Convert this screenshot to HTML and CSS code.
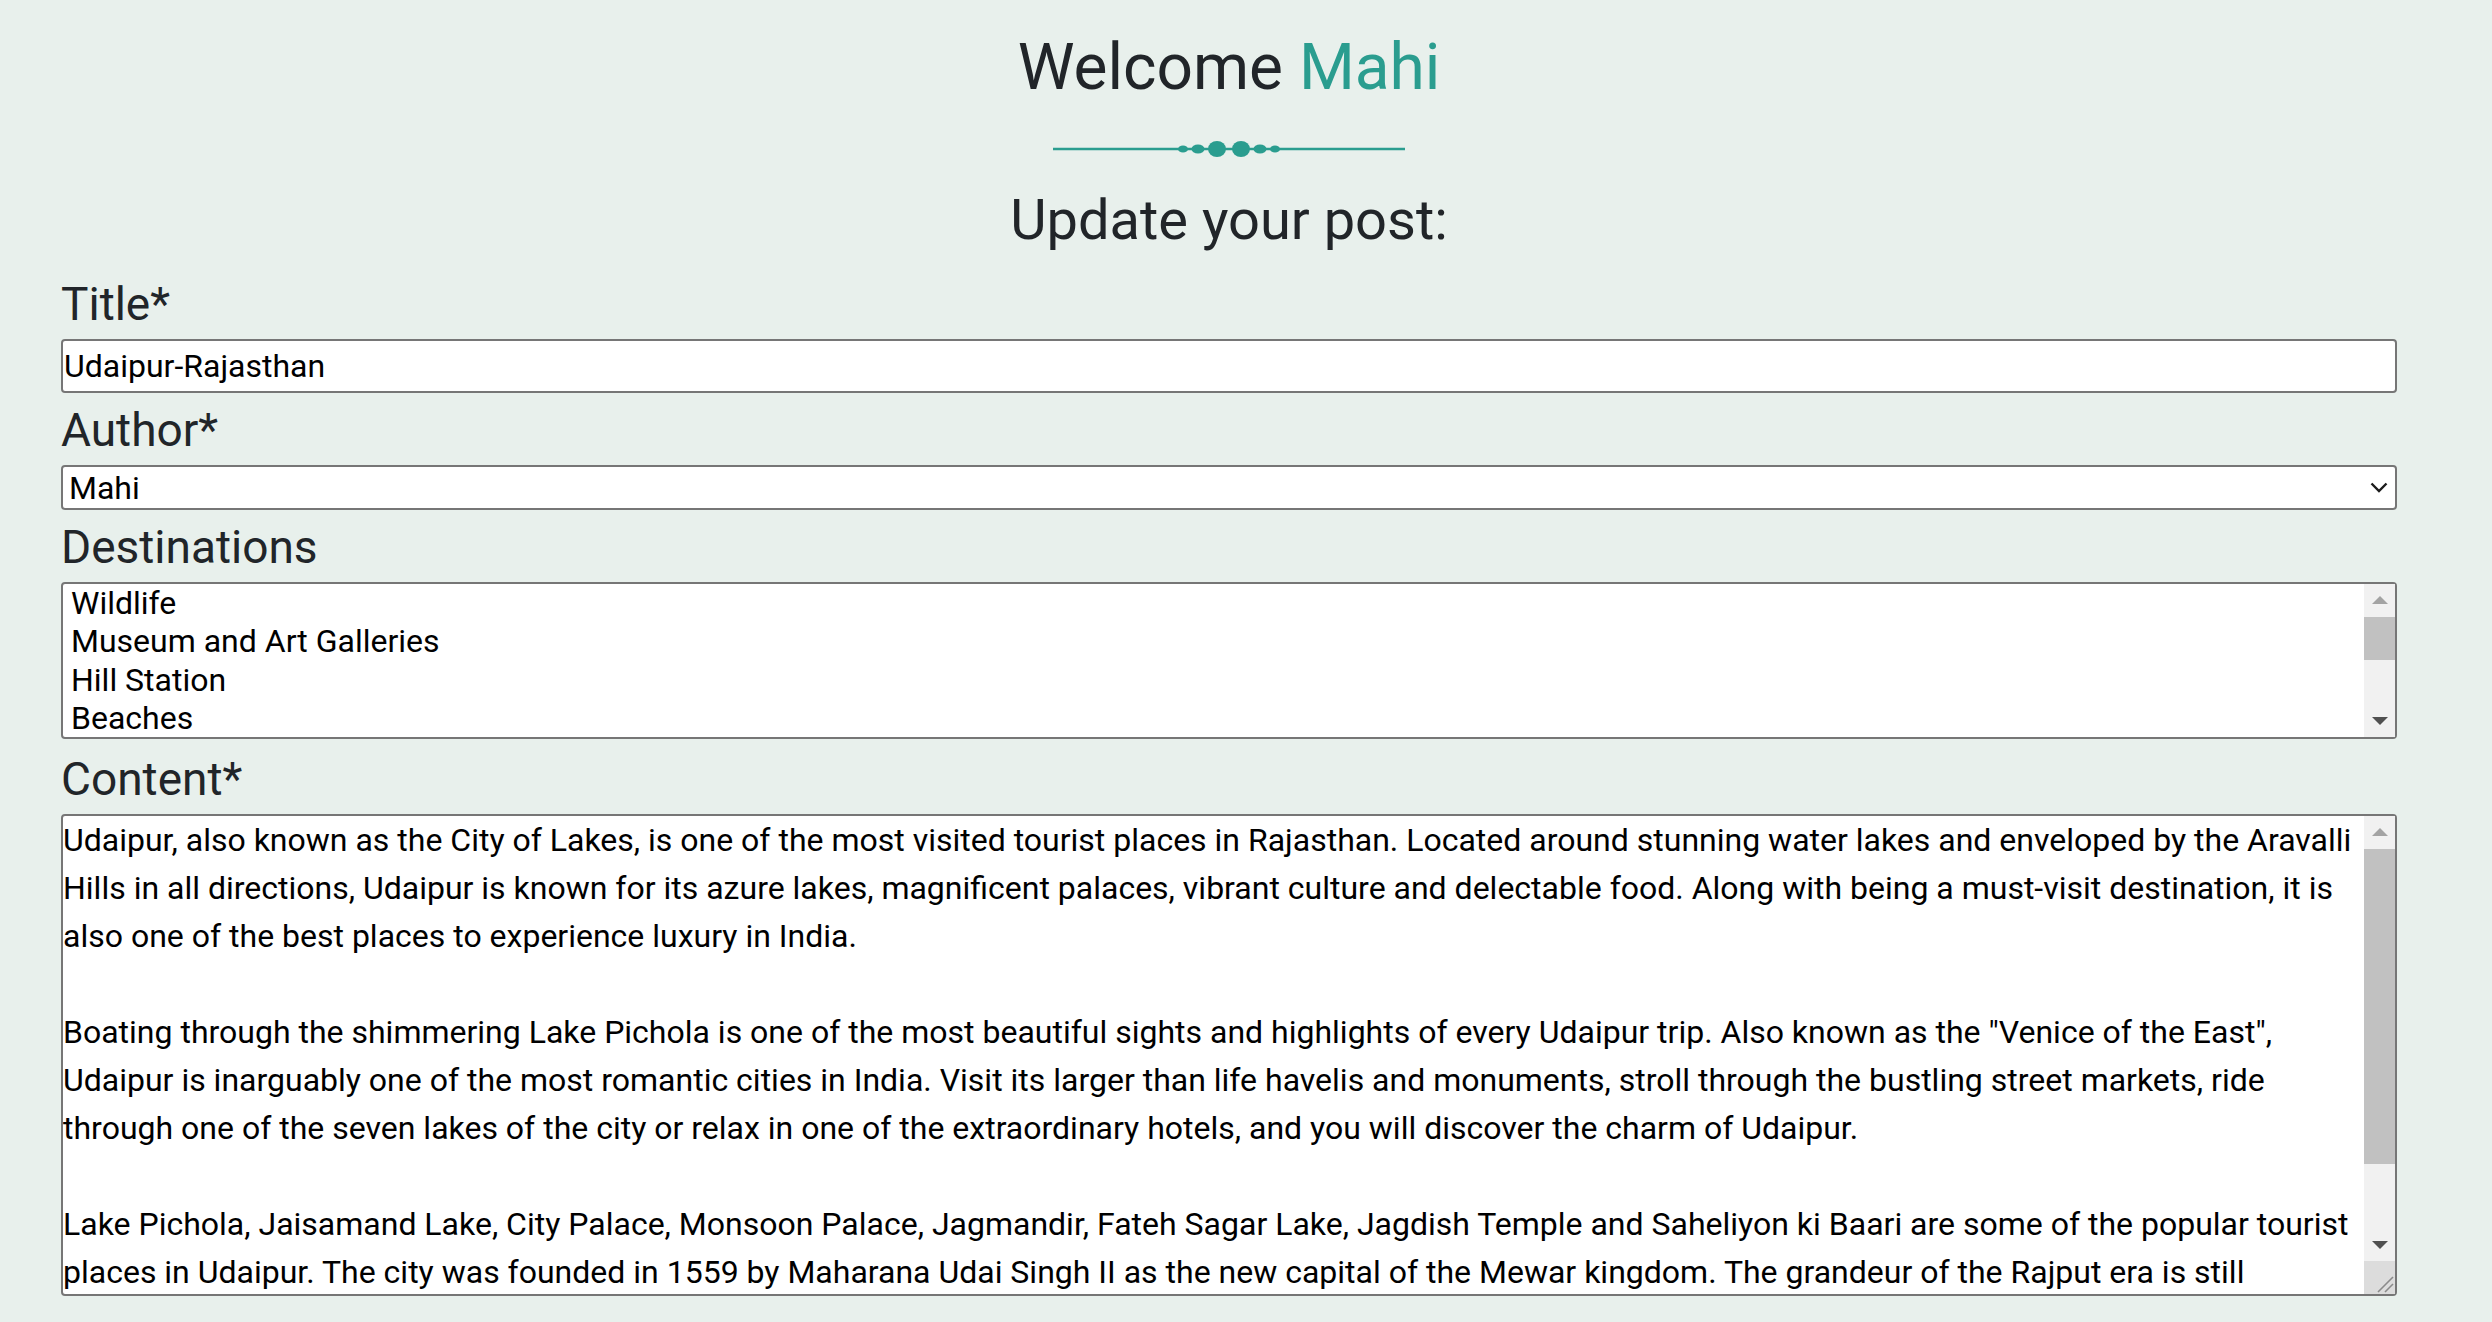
FILE: index.html
```html
<!DOCTYPE html>
<html lang="en">
<head>
<meta charset="utf-8">
<title>Update your post</title>
<link rel="stylesheet" href="styles.css">
</head>
<body>
<main class="page">
  <h1 class="welcome">Welcome <span class="accent">Mahi</span></h1>
  <div class="divider">
    <svg width="352" height="34" viewBox="0 0 352 34" aria-hidden="true">
      <line x1="0" y1="17" x2="352" y2="17" stroke="#2a9d8f" stroke-width="2.5"/>
      <ellipse cx="130" cy="17" rx="5" ry="3.6" fill="#2a9d8f"/>
      <ellipse cx="145" cy="17" rx="6.5" ry="4.6" fill="#2a9d8f"/>
      <ellipse cx="164" cy="17" rx="9" ry="8" fill="#2a9d8f"/>
      <ellipse cx="188" cy="17" rx="9" ry="8" fill="#2a9d8f"/>
      <ellipse cx="207" cy="17" rx="6.5" ry="4.6" fill="#2a9d8f"/>
      <ellipse cx="222" cy="17" rx="5" ry="3.6" fill="#2a9d8f"/>
    </svg>
  </div>
  <h2 class="subtitle">Update your post:</h2>
  <form class="post-form">
    <div class="field">
      <label class="field-label" for="title">Title*</label>
      <input class="text-input" id="title" type="text" value="Udaipur-Rajasthan">
    </div>
    <div class="field">
      <label class="field-label" for="author">Author*</label>
      <div class="select-wrap">
        <select class="select-input" id="author">
          <option selected>Mahi</option>
          <option>Rahul</option>
        </select>
        <svg class="chevron" width="18" height="11" viewBox="0 0 18 11" aria-hidden="true">
          <polyline points="1.5,1.5 9,9 16.5,1.5" fill="none" stroke="#1c1c1c" stroke-width="2.4"/>
        </svg>
      </div>
    </div>
    <div class="field">
      <label class="field-label" for="destinations">Destinations</label>
      <div class="scroll-wrap">
        <select class="listbox" id="destinations" multiple>
          <option>Wildlife</option>
          <option>Museum and Art Galleries</option>
          <option>Hill Station</option>
          <option>Beaches</option>
          <option>Heritage</option>
          <option>Pilgrimage</option>
          <option>Adventure</option>
          <option>Nature</option>
        </select>
        <div class="fake-scrollbar" aria-hidden="true">
          <div class="sb-btn"><span class="arrow-up"></span></div>
          <div class="sb-track">
            <div class="sb-thumb thumb-list"></div>
          </div>
          <div class="sb-btn"><span class="arrow-down"></span></div>
        </div>
      </div>
    </div>
    <div class="field field--content">
      <label class="field-label" for="content">Content*</label>
      <div class="scroll-wrap">
        <textarea class="content-area" id="content">Udaipur, also known as the City of Lakes, is one of the most visited tourist places in Rajasthan. Located around stunning water lakes and enveloped by the Aravalli Hills in all directions, Udaipur is known for its azure lakes, magnificent palaces, vibrant culture and delectable food. Along with being a must-visit destination, it is also one of the best places to experience luxury in India.

Boating through the shimmering Lake Pichola is one of the most beautiful sights and highlights of every Udaipur trip. Also known as the "Venice of the East", Udaipur is inarguably one of the most romantic cities in India. Visit its larger than life havelis and monuments, stroll through the bustling street markets, ride through one of the seven lakes of the city or relax in one of the extraordinary hotels, and you will discover the charm of Udaipur.

Lake Pichola, Jaisamand Lake, City Palace, Monsoon Palace, Jagmandir, Fateh Sagar Lake, Jagdish Temple and Saheliyon ki Baari are some of the popular tourist places in Udaipur. The city was founded in 1559 by Maharana Udai Singh II as the new capital of the Mewar kingdom. The grandeur of the Rajput era is still evident in its majestic palaces, forts, temples and havelis, which attract thousands of travellers from all over the world every year.</textarea>
        <div class="fake-scrollbar" aria-hidden="true">
          <div class="sb-btn"><span class="arrow-up"></span></div>
          <div class="sb-track">
            <div class="sb-thumb thumb-text"></div>
          </div>
          <div class="sb-btn"><span class="arrow-down"></span></div>
          <div class="sb-corner">
            <svg width="31" height="33" viewBox="0 0 31 33">
              <line x1="14" y1="31" x2="29" y2="16" stroke="#8a8a8a" stroke-width="1.6"/>
              <line x1="21" y1="31" x2="29" y2="23" stroke="#8a8a8a" stroke-width="1.6"/>
            </svg>
          </div>
        </div>
      </div>
    </div>
  </form>
</main>
</body>
</html>
```

FILE: styles.css
```css
html, body {
  margin: 0;
  padding: 0;
}

body {
  background: #e8f0ec;
  color: #212529;
  font-family: Roboto, "Liberation Sans", Arial, sans-serif;
}

.page {
  padding: 30px 95px 0 61px;
}

.welcome {
  margin: 0;
  font-size: 64px;
  line-height: 76px;
  font-weight: 400;
  text-align: center;
  color: #212529;
}

.accent {
  color: #2a9d8f;
}

.divider {
  margin-top: 26px;
  height: 34px;
  display: flex;
  justify-content: center;
}

.divider svg {
  display: block;
}

.subtitle {
  margin: 21px 0 0;
  font-size: 56px;
  line-height: 67px;
  font-weight: 400;
  text-align: center;
  color: #212529;
}

.post-form {
  margin-top: 17px;
}

.field + .field {
  margin-top: 4px;
}

.field--content {
  margin-top: 7px !important;
}

.field-label {
  display: block;
  font-size: 46px;
  line-height: 66px;
  color: #212529;
  margin-bottom: 2px;
}

.text-input,
.select-input,
.listbox,
.content-area {
  display: block;
  width: 100%;
  box-sizing: border-box;
  margin: 0;
  border: 2px solid #767676;
  border-radius: 4px;
  background: #fff;
  color: #000;
  font-family: Roboto, "Liberation Sans", Arial, sans-serif;
  font-size: 32px;
  outline: none;
}

.text-input {
  height: 54px;
  padding: 0 1px;
  line-height: 48px;
}

.select-wrap,
.scroll-wrap {
  position: relative;
}

.select-input {
  height: 45px;
  padding: 0 44px 0 6px;
  -webkit-appearance: none;
  appearance: none;
}

.chevron {
  position: absolute;
  right: 9px;
  top: 17px;
  pointer-events: none;
}

.listbox {
  height: 157px;
  padding: 0;
  overflow-y: hidden;
}

.listbox option {
  padding: 0 8px;
  line-height: 38.6px;
  color: #000;
}

.content-area {
  height: 482px;
  padding: 0 42px 0 0;
  line-height: 48px;
  overflow: hidden;
  resize: none;
}

/* emulated classic scrollbar */
.fake-scrollbar {
  position: absolute;
  top: 2px;
  right: 2px;
  bottom: 2px;
  width: 31px;
  display: flex;
  flex-direction: column;
  background: #f1f1f1;
  pointer-events: none;
}

.sb-btn {
  height: 32px;
  flex: none;
  display: flex;
  align-items: center;
  justify-content: center;
}

.sb-track {
  flex: 1;
  position: relative;
}

.sb-thumb {
  background: #c1c1c1;
  margin-top: 1px;
}

.thumb-list {
  height: 43px;
}

.thumb-text {
  height: 315px;
}

.arrow-up {
  width: 0;
  height: 0;
  border-left: 8px solid transparent;
  border-right: 8px solid transparent;
  border-bottom: 8px solid #a3a3a3;
}

.arrow-down {
  width: 0;
  height: 0;
  border-left: 8px solid transparent;
  border-right: 8px solid transparent;
  border-top: 8px solid #505050;
}

.sb-corner {
  height: 33px;
  flex: none;
  background: #dcdcdc;
}

.sb-corner svg {
  display: block;
}
```
